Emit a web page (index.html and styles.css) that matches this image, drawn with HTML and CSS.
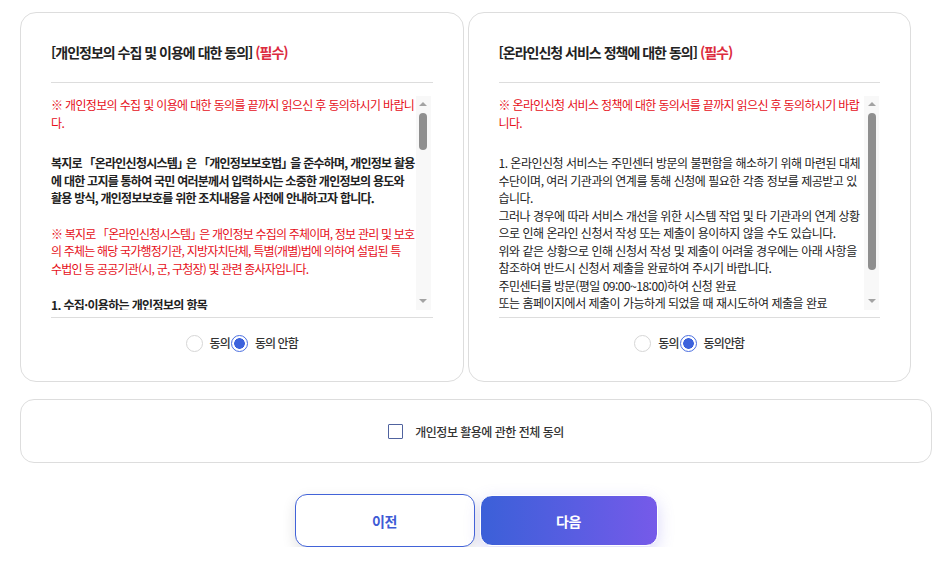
FILE: index.html
```html
<!DOCTYPE html>
<html lang="ko">
<head>
<meta charset="utf-8">
<title>약관 동의</title>
<link rel="stylesheet" href="styles.css">
</head>
<body>
<main class="page">
  <section class="terms-grid">
    <article class="terms-card">
      <h2 class="terms-title">[개인정보의 수집 및 이용에 대한 동의] <span class="req">(필수)</span></h2>
      <div class="terms-body">
        <div class="terms-scroll">
          <p class="notice lines">※ 개인정보의 수집 및 이용에 대한 동의를 끝까지 읽으신 후 동의하시기 바랍니<br>다.</p>
          <p class="strong lines">복지로 <span class="bo">「</span>온라인신청시스템<span class="bc">」</span>은 <span class="bo">「</span>개인정보보호법<span class="bc">」</span>을 준수하며, 개인정보 활용<br>에 대한 고지를 통하여 국민 여러분께서 입력하시는 소중한 개인정보의 용도와<br>활용 방식, 개인정보보호를 위한 조치내용을 사전에 안내하고자 합니다.</p>
          <p class="red lines">※ 복지로 <span class="bo">「</span>온라인신청시스템<span class="bc">」</span>은 개인정보 수집의 주체이며, 정보 관리 및 보호<br>의 주체는 해당 국가행정기관, 지방자치단체, 특별(개별)법에 의하여 설립된 특<br>수법인 등 공공기관(시, 군, 구청장) 및 관련 종사자입니다.</p>
          <h3 class="sub">1. 수집·이용하는 개인정보의 항목</h3>
          <p class="item">가. 필수항목 : 성명, 주민등록번호(외국인등록번호), 주소, 전화번호, 휴대전화번호, 이메일, 가구원 정보, 소득 및 재산 정보, 금융기관 계좌정보</p>
          <p class="item">나. 선택항목 : 보호자 및 대리신청인의 성명, 연락처, 신청인과의 관계</p>
          <h3 class="sub">2. 개인정보의 수집·이용 목적</h3>
          <p class="item">가. 사회보장급여 및 사회서비스 신청에 따른 자격 확인 및 수급자 선정</p>
          <p class="item">나. 급여 및 서비스의 제공, 변경, 중지 및 사후관리</p>
          <h3 class="sub">3. 개인정보의 보유 및 이용기간</h3>
          <p class="item">수집된 개인정보는 관계 법령에서 정한 기간 동안 보유·이용하며, 처리 목적이 달성된 경우에는 지체 없이 파기합니다.</p>
          <h3 class="sub">4. 동의를 거부할 권리 및 거부에 따른 불이익</h3>
          <p class="item">귀하는 개인정보의 수집·이용에 대한 동의를 거부할 권리가 있습니다. 다만, 동의를 거부하실 경우 온라인 신청이 제한될 수 있습니다.</p>
        </div>
        <div class="scrollbar sb-left" aria-hidden="true">
          <span class="sb-up"></span>
          <span class="sb-thumb sb-thumb-short"></span>
          <span class="sb-down"></span>
        </div>
      </div>
      <div class="terms-foot">
        <label class="opt"><input type="radio" name="agree1" class="radio"><span class="opt-text">동의</span></label>
        <label class="opt"><input type="radio" name="agree1" class="radio" checked><span class="opt-text">동의 안함</span></label>
      </div>
    </article>

    <article class="terms-card">
      <h2 class="terms-title">[온라인신청 서비스 정책에 대한 동의] <span class="req">(필수)</span></h2>
      <div class="terms-body">
        <div class="terms-scroll">
          <p class="notice lines">※ 온라인신청 서비스 정책에 대한 동의서를 끝까지 읽으신 후 동의하시기 바랍<br>니다.</p>
          <p class="plain lines">1. 온라인신청 서비스는 주민센터 방문의 불편함을 해소하기 위해 마련된 대체<br>수단이며, 여러 기관과의 연계를 통해 신청에 필요한 각종 정보를 제공받고 있<br>습니다.<br>그러나 경우에 따라 서비스 개선을 위한 시스템 작업 및 타 기관과의 연계 상황<br>으로 인해 온라인 신청서 작성 또는 제출이 용이하지 않을 수도 있습니다.<br>위와 같은 상황으로 인해 신청서 작성 및 제출이 어려울 경우에는 아래 사항을<br>참조하여 반드시 신청서 제출을 완료하여 주시기 바랍니다.<br>주민센터를 방문(평일 09:00~18:00)하여 신청 완료<br>또는 홈페이지에서 제출이 가능하게 되었을 때 재시도하여 제출을 완료<br>※ 제출이 완료되지 않은 신청서는 접수되지 않습니다.</p>
        </div>
        <div class="scrollbar sb-right" aria-hidden="true">
          <span class="sb-up"></span>
          <span class="sb-thumb sb-thumb-long"></span>
          <span class="sb-down"></span>
        </div>
      </div>
      <div class="terms-foot">
        <label class="opt"><input type="radio" name="agree2" class="radio"><span class="opt-text">동의</span></label>
        <label class="opt"><input type="radio" name="agree2" class="radio" checked><span class="opt-text">동의안함</span></label>
      </div>
    </article>
  </section>

  <section class="all-card">
    <label class="all-agree"><input type="checkbox" class="check"><span class="all-text">개인정보 활용에 관한 전체 동의</span></label>
  </section>

  <nav class="actions">
    <button type="button" class="btn btn-prev">이전</button>
    <button type="button" class="btn btn-next">다음</button>
  </nav>
</main>
</body>
</html>
```

FILE: styles.css
```css
* {
  box-sizing: border-box;
  margin: 0;
  padding: 0;
}

html, body {
  background: #ffffff;
}

body {
  font-family: "Noto Sans CJK KR", "Noto Sans", sans-serif;
  color: #222222;
}

.page {
  width: 935px;
  padding: 12px 3px 0 20px;
}

.terms-grid {
  display: grid;
  grid-template-columns: minmax(0, 1fr) minmax(0, 1fr);
  column-gap: 4px;
  margin-right: 21px;
}

.terms-card {
  min-width: 0;
  height: 370px;
  border: 1px solid #dddddd;
  border-radius: 16px;
  padding: 29px 30px 28px;
  display: flex;
  flex-direction: column;
}

.terms-title {
  font-size: 14px;
  font-weight: 700;
  line-height: 20px;
  letter-spacing: -1px;
  color: #222222;
  padding-bottom: 20px;
  border-bottom: 1px solid #dddddd;
}

.req {
  color: #dc2b3e;
}

.terms-body {
  margin-top: 13px;
  height: 214px;
  display: flex;
  min-width: 0;
}

.terms-scroll {
  flex: 1;
  min-width: 0;
  overflow: hidden;
  font-size: 12px;
  line-height: 17.5px;
  letter-spacing: -0.65px;
}

.terms-scroll p,
.terms-scroll h3 {
  font-size: 12px;
  line-height: 17.5px;
}

.lines {
  white-space: nowrap;
}

.bo {
  margin-left: -1px;
}

.bc {
  letter-spacing: -3px;
}

.scrollbar {
  flex: none;
  width: 15px;
  background: #f8f8f8;
  display: flex;
  flex-direction: column;
  align-items: center;
}

.sb-left {
  margin-right: 2px;
}

.sb-right {
  margin-right: 1px;
}

.sb-up {
  margin-top: 6px;
  width: 0;
  height: 0;
  border-left: 4px solid transparent;
  border-right: 4px solid transparent;
  border-bottom: 4px solid #a3a3a3;
}

.sb-thumb {
  margin-top: 7px;
  width: 8px;
  border-radius: 4px;
  background: #8f8f8f;
}

.sb-thumb-short {
  height: 37px;
}

.sb-thumb-long {
  height: 157px;
}

.sb-down {
  margin-top: auto;
  margin-bottom: 7px;
  width: 0;
  height: 0;
  border-left: 4px solid transparent;
  border-right: 4px solid transparent;
  border-top: 4px solid #a3a3a3;
}

.notice {
  color: #e60f19;
  margin-bottom: 23px;
}

.strong {
  font-weight: 700;
  color: #222222;
  letter-spacing: -0.75px;
}

.red {
  color: #e60f19;
  margin-top: 18px;
  letter-spacing: -0.8px;
}

.sub {
  font-weight: 700;
  color: #222222;
  margin-top: 18.5px;
}

.item {
  color: #333333;
  margin-top: 8px;
}

.plain {
  color: #222222;
  letter-spacing: -0.5px;
}

.terms-foot {
  margin-top: 7px;
  border-top: 1px solid #dddddd;
  padding-top: 15px;
  display: flex;
  justify-content: center;
  align-items: center;
  gap: 1px;
  height: 36px;
}

.opt {
  display: flex;
  align-items: center;
  height: 20px;
  font-size: 12px;
  font-weight: 500;
  letter-spacing: -0.9px;
  color: #333333;
}

.radio {
  appearance: none;
  -webkit-appearance: none;
  width: 17px;
  height: 17px;
  border: 1px solid #d6d6d6;
  border-radius: 50%;
  background: #ffffff;
  margin-right: 7px;
  flex: none;
}

.radio:checked {
  border: 1.5px solid #4a6ee0;
  background: radial-gradient(circle, #3d63dc 0 5px, #ffffff 5.6px);
}

.opt-text {
  line-height: 20px;
}

.all-card {
  margin-top: 17px;
  height: 64px;
  border: 1px solid #dddddd;
  border-radius: 14px;
  display: flex;
  justify-content: center;
  align-items: center;
}

.all-agree {
  display: flex;
  align-items: center;
  font-size: 12px;
  font-weight: 500;
  letter-spacing: -0.5px;
  color: #333333;
}

.check {
  appearance: none;
  -webkit-appearance: none;
  width: 15px;
  height: 15px;
  border: 1.5px solid #50639f;
  border-radius: 1px;
  background: #ffffff;
  margin-right: 12px;
  flex: none;
}

.actions {
  margin-top: 31px;
  display: flex;
  justify-content: center;
  align-items: center;
  gap: 5px;
}

.btn {
  font-family: "Noto Sans CJK KR", "Noto Sans", sans-serif;
  font-size: 14px;
  font-weight: 700;
  letter-spacing: -0.3px;
  border-radius: 12px;
  cursor: pointer;
}

.btn-prev {
  width: 180px;
  height: 53px;
  border: 1px solid #4263d8;
  background: #ffffff;
  color: #3d5bd5;
  box-shadow: 0 5px 14px rgba(0, 0, 0, 0.12);
}

.btn-next {
  width: 178px;
  height: 51px;
  border: 1.5px solid #ffffff;
  background: linear-gradient(90deg, #3b60d8 0%, #5a5de2 55%, #765ae9 100%);
  color: #ffffff;
  box-shadow: 0 5px 16px rgba(105, 95, 230, 0.25);
}
```
